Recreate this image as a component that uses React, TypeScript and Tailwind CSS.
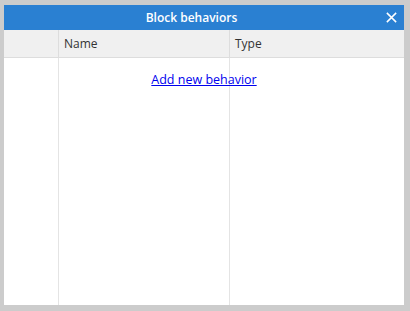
export default function App() {
  return (
    <div className="w-[410px] h-[311px] bg-[#cccccc] pt-[5px] pl-[4px] pr-[6px] pb-[6px] font-['Open_Sans','Noto_Sans',sans-serif]">
      <div className="flex flex-col w-full h-full bg-white">
        {/* Title bar */}
        <div className="flex items-center h-[25px] bg-[#2a80d2] text-white">
          <div className="flex-1 flex justify-center">
            <span className="text-[12px] font-semibold">Block behaviors</span>
          </div>
          <button className="flex items-center justify-center w-[25px] h-[25px]">
            <svg viewBox="0 0 14 14" width="13" height="13">
              <path d="M2 2 L12 12 M12 2 L2 12" stroke="white" strokeWidth="1.6" />
            </svg>
          </button>
        </div>

        {/* Header row */}
        <div className="flex h-[28px] bg-[#f0f0f0] border-b border-[#dddddd] text-[12px] text-[#333]">
          <div className="w-[55px] border-r border-[#dddddd]" />
          <div className="w-[171px] border-r border-[#dddddd] flex items-center pl-[5px]">Name</div>
          <div className="flex-1 flex items-center pl-[5px]">Type</div>
        </div>

        {/* Body */}
        <div className="relative flex flex-1">
          <div className="w-[55px] border-r border-[#e4e4e4]" />
          <div className="w-[171px] border-r border-[#e4e4e4]" />
          <div className="flex-1" />
          <div className="absolute left-0 right-0 top-[13px] flex justify-center">
            <a href="#" className="text-[#0000ee] underline text-[12.5px]">
              Add new behavior
            </a>
          </div>
        </div>
      </div>
    </div>
  );
}
